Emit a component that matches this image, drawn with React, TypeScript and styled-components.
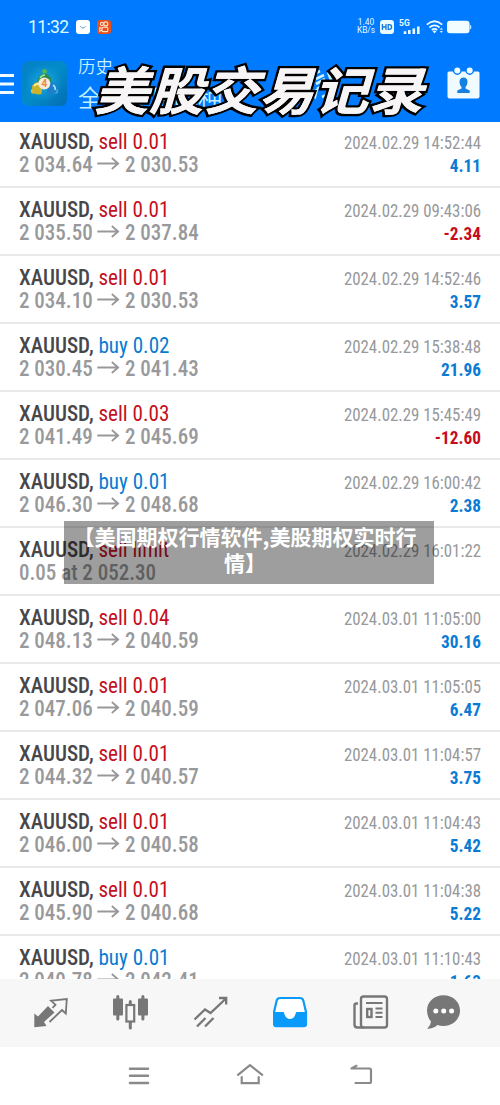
import React from "react";
import styled, { createGlobalStyle } from "styled-components";

const GlobalStyle = createGlobalStyle`
  * { box-sizing: border-box; }
  body { margin: 0; background: #fff; }
`;

const cond = `"Roboto Condensed", Roboto, "Liberation Sans", sans-serif`;
const cjk = `"Noto Sans CJK SC", sans-serif`;

const Screen = styled.div`
  position: relative;
  display: flex;
  flex-direction: column;
  width: 500px;
  height: 1105px;
  overflow: hidden;
  background: #fff;
`;

const Header = styled.header`
  height: 122px;
  flex: none;
  background: #007aff;
  color: #fff;
`;

const StatusBar = styled.div`
  display: flex;
  align-items: center;
  height: 54px;
  padding: 0 28px;
`;

const Clock = styled.span`
  width: 48px;
  font: 400 17.5px Roboto, sans-serif;
  letter-spacing: -0.6px;
  color: #dcfbff;
`;

const StatusIcon = styled.svg<{ $gap: number }>`
  flex: none;
  margin-left: ${(p) => p.$gap}px;
`;

const Speed = styled.div`
  display: flex;
  flex-direction: column;
  align-items: center;
  margin-left: auto;
  width: 18px;
  font: 400 8.4px/7.8px Roboto, sans-serif;
  white-space: nowrap;
  color: #e4faff;
`;

const AppBar = styled.div`
  position: relative;
  display: flex;
  align-items: flex-start;
  height: 68px;
`;

const MenuIcon = styled.svg`
  margin-top: 19px;
`;

const Logo = styled.svg`
  margin: 7px 0 0 8px;
`;

const Titles = styled.div`
  margin-left: 11px;
  font-family: ${cjk};
  font-weight: 350;
  color: #c5f1ff;
  white-space: nowrap;
`;

const Title = styled.div`
  font-size: 17.5px;
  line-height: 24px;
`;

const Subtitle = styled.div`
  margin-top: 4px;
  font-size: 24px;
  line-height: 30px;
`;

const ExchangeIcon = styled.svg`
  margin: 13px 0 0 82px;
`;

const CalendarIcon = styled.svg`
  margin: 12px 20px 0 auto;
`;

const Banner = styled.div`
  position: absolute;
  left: 100px;
  top: 1px;
  font: 700 51.5px/66px ${cjk};
  letter-spacing: 0.3px;
  white-space: nowrap;
  color: #f8f5f7;
  -webkit-text-stroke: 5px #000;
  paint-order: stroke fill;
  text-shadow: 0.4px 0 0 #f8f5f7;
  transform: skewX(-16deg) scaleX(1.06);
  transform-origin: left center;
`;

const List = styled.main`
  height: 857px;
  flex: none;
  overflow: hidden;
`;

const Row = styled.section`
  display: flex;
  justify-content: space-between;
  height: 68px;
  padding: 9px 19px 0 19px;
  border-bottom: 2px solid #e9e9e9;
  font-family: ${cond};
  &:first-child {
    height: 66px;
    padding-top: 7px;
  }
`;

const Column = styled.div`
  white-space: nowrap;
`;

const Deal = styled.div`
  font-size: 22.5px;
  line-height: 24px;
  transform: scaleX(0.938);
  transform-origin: left;
`;

const Symbol = styled.span`
  font-weight: 500;
  color: #47474b;
`;

const Side = styled.span<{ $buy: boolean }>`
  color: ${(p) => (p.$buy ? "#087bd1" : "#c4101f")};
`;

const Price = styled.div`
  display: flex;
  align-items: center;
  font-size: 21.5px;
  font-weight: 500;
  line-height: 23px;
  color: #98999b;
  transform: scaleX(0.977);
  transform-origin: left;
`;

const Arrow = styled.svg`
  margin: 0 5px 1px 5px;
`;

const Time = styled.div`
  margin-top: 3px;
  font-size: 18.7px;
  line-height: 23px;
  color: #98999b;
  transform: scaleX(0.902);
  transform-origin: right;
`;

const Profit = styled.div<{ $loss: boolean }>`
  font-size: 18.5px;
  font-weight: 700;
  line-height: 22px;
  text-align: right;
  color: ${(p) => (p.$loss ? "#c60b1c" : "#0a7bd4")};
  transform: scaleX(0.935);
  transform-origin: right;
`;

const Caption = styled.div`
  position: absolute;
  left: 64px;
  top: 521px;
  width: 370px;
  height: 63px;
  padding: 2px 8px 0 0;
  background: rgba(0, 0, 0, 0.38);
  font: 700 21px/26px ${cjk};
  text-align: center;
  white-space: pre;
  color: #fff;
`;

const TabBar = styled.nav`
  display: flex;
  gap: 44px;
  height: 68px;
  flex: none;
  padding: 15px 0 0 33px;
  background: #f7f7f7;
`;

const TabIcon = styled.svg<{ $shift?: number }>`
  flex: none;
  margin-left: ${(p) => p.$shift || 0}px;
`;

const SystemNav = styled.footer`
  display: flex;
  gap: 81px;
  height: 58px;
  padding: 14px 0 0 124px;
`;

type Trade = {
  side: string;
  open: string;
  close?: string;
  time: string;
  profit?: string;
};

const trades: Trade[] = [
  { side: "sell 0.01", open: "2 034.64", close: "2 030.53", time: "2024.02.29 14:52:44", profit: "4.11" },
  { side: "sell 0.01", open: "2 035.50", close: "2 037.84", time: "2024.02.29 09:43:06", profit: "-2.34" },
  { side: "sell 0.01", open: "2 034.10", close: "2 030.53", time: "2024.02.29 14:52:46", profit: "3.57" },
  { side: "buy 0.02", open: "2 030.45", close: "2 041.43", time: "2024.02.29 15:38:48", profit: "21.96" },
  { side: "sell 0.03", open: "2 041.49", close: "2 045.69", time: "2024.02.29 15:45:49", profit: "-12.60" },
  { side: "buy 0.01", open: "2 046.30", close: "2 048.68", time: "2024.02.29 16:00:42", profit: "2.38" },
  { side: "sell limit", open: "0.05 at 2 052.30", time: "2024.02.29 16:01:22" },
  { side: "sell 0.04", open: "2 048.13", close: "2 040.59", time: "2024.03.01 11:05:00", profit: "30.16" },
  { side: "sell 0.01", open: "2 047.06", close: "2 040.59", time: "2024.03.01 11:05:05", profit: "6.47" },
  { side: "sell 0.01", open: "2 044.32", close: "2 040.57", time: "2024.03.01 11:04:57", profit: "3.75" },
  { side: "sell 0.01", open: "2 046.00", close: "2 040.58", time: "2024.03.01 11:04:43", profit: "5.42" },
  { side: "sell 0.01", open: "2 045.90", close: "2 040.68", time: "2024.03.01 11:04:38", profit: "5.22" },
  { side: "buy 0.01", open: "2 040.78", close: "2 042.41", time: "2024.03.01 11:10:43", profit: "1.63" },
];

function TradeRow({ t }: { t: Trade }) {
  return (
    <Row>
      <Column>
        <Deal>
          <Symbol>XAUUSD, </Symbol>
          <Side $buy={t.side.startsWith("buy")}>{t.side}</Side>
        </Deal>
        <Price>
          {t.open}
          {t.close && (
            <>
              <Arrow width="23" height="14" viewBox="0 0 23 14" fill="none" stroke="#98999b" strokeWidth="1.9">
                <path d="M0 6.5H21.5M15 1L21.5 6.5L15 12" />
              </Arrow>
              {t.close}
            </>
          )}
        </Price>
      </Column>
      <Column>
        <Time>{t.time}</Time>
        {t.profit && <Profit $loss={t.profit.startsWith("-")}>{t.profit}</Profit>}
      </Column>
    </Row>
  );
}

export default function App() {
  return (
    <Screen>
      <GlobalStyle />
      <Header>
        <StatusBar>
          <Clock>11:32</Clock>
          <StatusIcon $gap={0} width="14" height="14" viewBox="0 0 14 14">
            <rect width="14" height="14" rx="3" fill="#fff" />
            <path d="M4.3 6.3L5.3 7M9.7 6.3L8.7 7M5.5 7.5Q7 8.7 8.5 7.5" stroke="#3b86c8" strokeWidth=".9" fill="none" />
          </StatusIcon>
          <StatusIcon $gap={7} width="14" height="14" viewBox="0 0 14 14">
            <rect width="14" height="14" rx="3" fill="#e8501c" />
            <g fill="none" stroke="#ffe6d0" strokeWidth="1.1">
              <circle cx="5" cy="4" r="1.6" />
              <circle cx="8.8" cy="3.9" r="2" />
              <rect x="5" y="7.2" width="5.8" height="4.4" rx="1.2" />
              <path d="M5 8.6L2.8 7.6V11.2L5 10.2" />
            </g>
          </StatusIcon>
          <Speed>
            <span>1.40</span>
            <span>KB/s</span>
          </Speed>
          <StatusIcon $gap={5} width="14" height="14" viewBox="0 0 14 14">
            <rect width="14" height="14" rx="3" fill="#e9fbff" />
            <path d="M2.4 4V10M6 4V10M2.4 7H6M8.2 4.6V9.4H9.3Q11.6 9.4 11.6 7T9.3 4.6Z" stroke="#1478d8" strokeWidth="1.3" fill="none" />
          </StatusIcon>
          <StatusIcon $gap={5} width="22" height="16" viewBox="0 0 22 16">
            <text x="0" y="7" fontFamily="Roboto, sans-serif" fontSize="8.5" fontWeight="700" fill="#e9fbff">5G</text>
            <path d="M6 12.2V15M10.3 11V15M14.8 9.5V15M19.3 7.5V15" stroke="#e9fbff" strokeWidth="2.6" />
          </StatusIcon>
          <StatusIcon $gap={5} width="18" height="14" viewBox="0 0 18 14">
            <g fill="none" stroke="#e9fbff" strokeWidth="1.8">
              <path d="M.8 4.6Q8.5-2 16.2 4.6" />
              <path d="M3.4 7.5Q8.5 3.2 13.6 7.5" />
              <path d="M5.8 10Q8.5 7.8 11.2 10" />
            </g>
            <path d="M6.6 11.2Q8.5 9.8 10.4 11.2L8.5 13.4Z" fill="#e9fbff" />
            <path d="M13.6 9.7L15.3 7.7L17 9.7ZM13.6 11L15.3 13L17 11Z" fill="#bfe9ff" />
          </StatusIcon>
          <StatusIcon $gap={3} width="25" height="14" viewBox="0 0 25 14">
            <rect y=".8" width="22.5" height="12.4" rx="3" fill="#f2fdff" />
            <path d="M22.5 4.5Q24.5 4.5 24.5 7T22.5 9.5Z" fill="#a9dcff" />
          </StatusIcon>
        </StatusBar>
        <AppBar>
          <MenuIcon width="14" height="22" viewBox="0 0 14 22" fill="#f1fdff">
            <path d="M0 1H14V4H0ZM0 9.5H14V12.5H0ZM0 18H14V21H0Z" />
          </MenuIcon>
          <Logo width="45" height="45" viewBox="0 0 45 45">
            <defs>
              <linearGradient id="tile" x1="0" y1="0" x2="1" y2="1">
                <stop offset="0" stopColor="#057fc8" />
                <stop offset=".5" stopColor="#038bc9" />
                <stop offset="1" stopColor="#046db4" />
              </linearGradient>
              <radialGradient id="glow">
                <stop offset="0" stopColor="#2fc0ee" />
                <stop offset="1" stopColor="#2fc0ee" stopOpacity="0" />
              </radialGradient>
            </defs>
            <rect width="45" height="45" rx="6" fill="url(#tile)" />
            <circle cx="22" cy="22" r="19" fill="url(#glow)" opacity=".55" />
            <circle cx="22.5" cy="10.5" r="2.4" fill="#53b65a" />
            <path d="M15.5 20Q16 14 22.5 12.5Q29 14 29.5 20Q26 24 22.5 22Q19 24 15.5 20Z" fill="#2d8c48" />
            <path d="M18 17Q20 14 23 14" stroke="#a2e29a" strokeWidth="1.6" fill="none" />
            <circle cx="11.5" cy="30" r="2.6" fill="#d9c33c" />
            <path d="M10 25Q13 20 18 21.5Q21 27 19.5 33Q14 34.5 10.5 31Z" fill="#cdb32a" />
            <path d="M12 25Q14 22.5 17 23" stroke="#fff2a0" strokeWidth="1.6" fill="none" />
            <circle cx="33.5" cy="30" r="2.6" fill="#47aee6" />
            <path d="M35 25Q32 20 27 21.5Q24 27 25.5 33Q31 34.5 34.5 31Z" fill="#1f7fc8" />
            <path d="M31 24Q34 26 33 29" stroke="#a4e2ff" strokeWidth="1.6" fill="none" />
            <circle cx="22.3" cy="22.5" r="6" fill="#f6ead9" />
            <text x="22.3" y="26.3" textAnchor="middle" fontFamily="Roboto, sans-serif" fontSize="10.5" fontWeight="700" fill="#e58a4c">4</text>
          </Logo>
          <Titles>
            <Title>历史</Title>
            <Subtitle>全部交易品种</Subtitle>
          </Titles>
          <ExchangeIcon width="34" height="34" viewBox="0 0 34 34" fill="none" stroke="#c5f1ff" strokeWidth="2.6">
            <path d="M16 4Q6 8 6 18L10 29M4 24L11 30L13 22M18 30Q28 26 28 16L24 5M12 12L20 8M12 17L21 12M13 22L22 17" />
          </ExchangeIcon>
          <CalendarIcon width="33" height="34" viewBox="0 0 33 34">
            <path d="M2 5.5H31Q32.5 5.5 32.5 7V30.5Q32.5 32.5 30.5 32.5H2.5Q.5 32.5 .5 30.5V7Q.5 5.5 2 5.5Z" fill="#f0fbff" />
            <g fill="#f0fbff" stroke="#007aff" strokeWidth="1.4">
              <circle cx="10.3" cy="4.5" r="3.7" />
              <circle cx="22.7" cy="4.5" r="3.7" />
            </g>
            <path d="M16.5 11.5Q20.5 11.5 20.5 16Q20.5 19 18.5 21V22.5L22.7 24.5V27H10.3V24.5L14.5 22.5V21Q12.5 19 12.5 16Q12.5 11.5 16.5 11.5Z" fill="#1480e0" />
          </CalendarIcon>
          <Banner>美股交易记录</Banner>
        </AppBar>
      </Header>
      <List>
        {trades.map((t, i) => (
          <TradeRow key={i} t={t} />
        ))}
      </List>
      <TabBar>
        <TabIcon width="36" height="36" viewBox="33 994 36 36">
          <path d="M34.3 1013.5L38 1016.5L48 1006L54.5 1012.5L44 1022L46.5 1026L34.3 1027.2Z" fill="#777" />
          <path d="M52.5 1008L55.5 1004.7L51 1000.7L66.8 999L65.8 1013.5L62 1010L49.5 1022" fill="none" stroke="#777" strokeWidth="1.8" />
        </TabIcon>
        <TabIcon width="36" height="36" viewBox="113 994 36 36">
          <g fill="#777">
            <rect x="113" y="998.5" width="10" height="17" rx="1" />
            <rect x="116.3" y="995" width="3" height="25.5" rx="1.5" />
            <rect x="138" y="998.5" width="10" height="17" rx="1" />
            <rect x="141.4" y="995" width="3" height="25.5" rx="1.5" />
            <rect x="128.8" y="1000" width="3" height="6" rx="1.5" />
            <rect x="128.8" y="1021" width="3" height="8.5" rx="1.5" />
          </g>
          <rect x="126.4" y="1005" width="7.8" height="16.5" fill="none" stroke="#777" strokeWidth="2.2" />
        </TabIcon>
        <TabIcon width="36" height="36" viewBox="193 994 36 36" fill="none" stroke="#777" strokeWidth="2.3">
          <path d="M194.5 1019.5L205 1009.5L210.5 1013L226 998.5M219 998H226.2V1004.5M197 1026.5L205.5 1018M205 1026.5L213.5 1018" />
        </TabIcon>
        <TabIcon width="36" height="36" viewBox="273 994 36 36">
          <path d="M280 998H300Q302.5 998 303.3 1000.5L306 1012V1024Q306 1026.2 303.8 1026.2H276.2Q274 1026.2 274 1024V1012L276.7 1000.5Q277.5 998 280 998Z" fill="#fff" stroke="#0a9bfa" strokeWidth="2.2" />
          <path d="M274 1012H283.5C284.5 1012 284.5 1019 290 1019S295.5 1012 296.5 1012H306V1025Q306 1026 305 1026H275Q274 1026 274 1025Z" fill="#0a9bfa" />
        </TabIcon>
        <TabIcon width="36" height="36" viewBox="353 994 36 36" fill="none" stroke="#777" strokeWidth="2.4">
          <rect x="361" y="996.5" width="26" height="31" rx="2.5" />
          <path d="M358 1003.5H356.5Q354.5 1003.5 354.5 1005.5V1024.5Q354.5 1027.5 357.5 1027.5H364" />
          <path d="M366 1003H382.5M375.5 1008.6H382.5M375.5 1012.8H382.5M375.5 1017H382.5" strokeWidth="2" />
          <rect x="367.2" y="1009" width="4.3" height="8" />
        </TabIcon>
        <TabIcon $shift={-7} width="36" height="36" viewBox="426 994 36 36">
          <path d="M443.5 995.2C453 995.2 460 1002 460 1010.5S453 1026 443.5 1026Q440 1026 437.5 1025Q433 1029 427.2 1028.8Q430.8 1025.5 431 1021.5Q427 1017 427 1010.5C427 1002 434 995.2 443.5 995.2Z" fill="#777" />
          <g fill="#fff">
            <circle cx="435.8" cy="1011" r="2.5" />
            <circle cx="443.7" cy="1011" r="2.5" />
            <circle cx="451.6" cy="1011" r="2.5" />
          </g>
        </TabIcon>
      </TabBar>
      <SystemNav>
        <TabIcon width="30" height="30" viewBox="124 1061 30 30" stroke="#8a8a8a" strokeWidth="2.5" strokeLinecap="round">
          <path d="M130 1068.7H148M130 1075.8H148M130 1082.9H148" />
        </TabIcon>
        <TabIcon width="30" height="30" viewBox="235 1061 30 30" fill="none" stroke="#8a8a8a" strokeWidth="2.2" strokeLinecap="round">
          <path d="M238 1074.8L250 1065.2L262.2 1074.8M241.7 1077V1083.2H258.7V1077" />
        </TabIcon>
        <TabIcon width="30" height="30" viewBox="346 1061 30 30" fill="none" stroke="#8a8a8a" strokeWidth="2.2" strokeLinecap="round" strokeLinejoin="round">
          <path d="M356.5 1065.8L351.5 1068.5H369.5Q371 1068.5 371 1070V1081.5Q371 1083 369.5 1083H355.5" />
        </TabIcon>
      </SystemNav>
      <Caption>{"【美国期权行情软件,美股期权实时行\n情】"}</Caption>
    </Screen>
  );
}
